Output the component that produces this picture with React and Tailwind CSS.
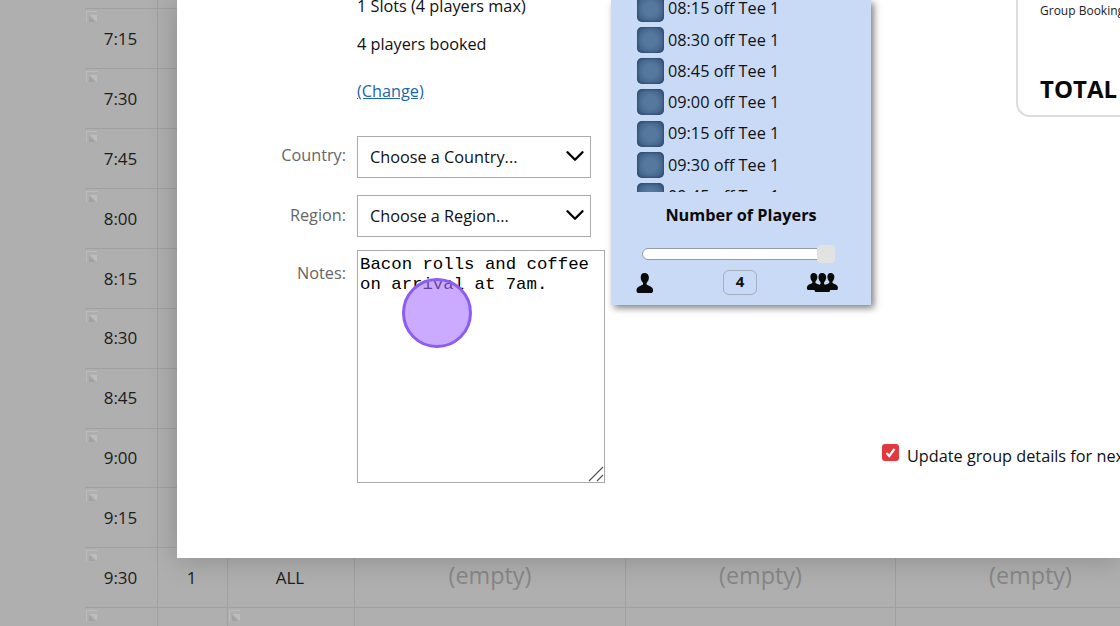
import React from 'react';
import { ChevronDown } from 'lucide-react';

const TIMES = ['', '7:15', '7:30', '7:45', '8:00', '8:15', '8:30', '8:45', '9:00', '9:15', '9:30', ''];
const TEE_TIMES = ['08:15', '08:30', '08:45', '09:00', '09:15', '09:30', '09:45'];

function BrokenImage() {
  return (
    <svg className="absolute left-px top-[2px]" width="12" height="12" viewBox="0 0 12 12" fill="none">
      <path d="M.5 11.500V.5h11" stroke="#bcbcbc" />
      <path d="M4 4h7v7z" fill="#bdbdbd" />
      <path d="M3 5v6h6z" fill="#a2a2a2" />
    </svg>
  );
}

function EmptyCell({ show, className }) {
  return (
    <div className={`flex items-center justify-center border-r border-[#a0a0a0] pb-[5px] text-[23.4px] text-[#878787] ${className}`}>
      {show && '(empty)'}
    </div>
  );
}

function GridRow({ time, index }) {
  const isSlot = time === '9:30';
  const isLast = index === TIMES.length - 1;
  return (
    <div className="flex h-[59.9px] border-b border-[#a0a0a0] text-[17px] text-[#1c1c1c]">
      <div className="relative flex w-[73px] items-center justify-center border-r border-[#a0a0a0] pr-[1px]">
        {index > 0 && <BrokenImage />}
        <span>{time}</span>
      </div>
      <div className="flex w-[70px] items-center justify-center border-r border-[#a0a0a0] pr-[2px]">{isSlot && '1'}</div>
      <div className="relative flex w-[127px] items-center justify-center border-r border-[#a0a0a0] pr-[2px]">
        {isLast && <BrokenImage />}
        {isSlot && 'ALL'}
      </div>
      <EmptyCell show={isSlot} className="w-[271px]" />
      <EmptyCell show={isSlot} className="w-[270px]" />
      <EmptyCell show={isSlot} className="w-[270px]" />
    </div>
  );
}

function SelectBox({ label, placeholder, className, labelClass }) {
  return (
    <div className={`flex items-start ${className}`}>
      <label className={`w-[169px] text-right text-[#666] ${labelClass}`}>{label}</label>
      <div className="relative ml-[11px] flex h-[42px] w-[234px] items-center border border-[#ababab] bg-white pl-[12px]">
        {placeholder}
        <ChevronDown className="absolute right-0 top-[4px] h-[30px] w-[30px] text-black" strokeWidth={1.9} />
      </div>
    </div>
  );
}

function Person({ x = 0, scale = 1 }) {
  return (
    <path
      transform={`translate(${x} 0) scale(${scale})`}
      d="M9 0c2.800 0 4.400 2 4.400 4.600 0 2.200-1 3.800-2 5-.6.800-.5 2 .4 2.500 2 1 5.200 1.800 5.700 4.500.3 1.700-.3 3.400-1.200 3.400H2.300c-.9 0-1.500-1.700-1.200-3.400.5-2.700 3.700-3.500 5.700-4.500.9-.5 1-1.700.4-2.500-1-1.200-2-2.800-2-5C5.200 2 6.200 0 9 0z"
      fill="#0a0a0a"
    />
  );
}

export default function App() {
  return (
    <div className="relative h-[626px] w-[1120px] overflow-hidden bg-[#afafaf] font-['Open_Sans',sans-serif]">
      {/* greyed-out tee sheet behind the dialog */}
      <div className="ml-[85px] -mt-[50.6px] w-[1100px]">
        {TIMES.map((t, i) => (
          <GridRow key={i} time={t} index={i} />
        ))}
      </div>

      {/* booking dialog */}
      <div className="absolute left-[177px] top-0 flex h-[558px] w-[943px] bg-white text-[16.25px] shadow-[0_0_28px_rgba(0,0,0,0.22)]">
        <div className="w-[434px] shrink-0 -mt-[6px] text-[#111]">
          <div className="ml-[180px] h-[24px] leading-[24px]">1 Slots (4 players max)</div>
          <div className="ml-[180px] mt-[14px] h-[24px] leading-[24px]">4 players booked</div>
          <a className="ml-[180px] mt-[23px] block h-[24px] leading-[24px] text-[#1a66b0] underline">(Change)</a>
          <SelectBox label="Country:" placeholder="Choose a Country..." className="mt-[33px]" labelClass="pt-[7px]" />
          <SelectBox label="Region:" placeholder="Choose a Region..." className="mt-[17px]" labelClass="pt-[8px]" />
          <div className="mt-[13px] flex items-start">
            <label className="w-[169px] pt-[11px] text-right text-[#666]">Notes:</label>
            <div className="relative ml-[11px] h-[233px] w-[248px]">
              <textarea
                readOnly
                className="h-full w-full resize-none border border-[#ababab] bg-white px-[2px] pt-[4px] font-['Liberation_Mono',monospace] text-[17.35px] leading-[20px] text-black outline-none"
                value="Bacon rolls and coffee on arrival at 7am."
              />
              <svg className="absolute bottom-[1px] right-[1px]" width="16" height="16" viewBox="0 0 16 16" fill="none">
                <path d="M1 15 15 1M9 15l6-6" stroke="#555" strokeWidth="1.200" />
              </svg>
            </div>
          </div>
        </div>

        {/* tee time picker */}
        <div className="h-[305px] w-[260px] shrink-0 bg-[#c9daf6] shadow-[3px_3px_7px_rgba(0,0,0,0.5)]">
          <div className="ml-[26px] h-[192px] overflow-hidden">
            <div className="-mt-[4.5px] flex flex-col gap-[5.25px]">
              {TEE_TIMES.map((t) => (
                <div key={t} className="flex h-[26px] shrink-0 items-center text-[#111]">
                  <span className="h-[26px] w-[27px] shrink-0 rounded-[5px] bg-[radial-gradient(circle,#55789f_35%,#35537a)] shadow-[inset_0_0_3px_rgba(25,45,75,0.8)]" />
                  <span className="ml-[4px]">{t} off Tee 1</span>
                </div>
              ))}
            </div>
          </div>
          <div className="mt-[11px] text-center font-bold leading-[24px] text-[#0a0a0a]">Number of Players</div>
          <div className="relative ml-[31px] mt-[21px] h-[12px] w-[193px] rounded-full border border-[#8d9bb3] bg-white">
            <span className="absolute -right-[1px] -top-[4px] h-[18px] w-[18px] rounded-[4px] bg-[#e2e2e2]" />
          </div>
          <div className="ml-[24px] mt-[10px] flex h-[24px] items-center">
            <svg width="19" height="21" viewBox="0 0 18 21" className="mt-[2px]">
              <Person />
            </svg>
            <span className="ml-[69px] flex h-[25px] w-[34px] items-center justify-center rounded-[6px] border border-[#a3aebf] pb-[2px] text-[15px] font-bold text-[#111]">4</span>
            <svg width="32" height="21" viewBox="0 0 32 21" className="ml-[49px] mt-[2px]">
              <Person x={0} scale={0.85} />
              <Person x={17} scale={0.85} />
              <Person x={7.500} scale={0.95} />
            </svg>
          </div>
        </div>

        {/* price summary and group update */}
        <div className="relative flex-1">
          <div className="ml-[145px] -mt-[2px] h-[119px] w-[200px] rounded-bl-[14px] border-b-2 border-l-2 border-[#dcdcdc] pl-[22px]">
            <div className="pt-[5px] text-[12px] leading-[16px] text-[#222]">Group Booking</div>
            <div className="mt-[54px] text-[24px] font-bold leading-[32px] text-[#0a0a0a]">TOTAL</div>
          </div>
          <div className="ml-[11px] mt-[324px] flex items-start whitespace-nowrap text-[#111]">
            <span className="mt-[3px] flex h-[17px] w-[17px] shrink-0 items-center justify-center rounded-[3px] bg-[#e2393f]">
              <svg width="11" height="11" viewBox="0 0 11 11" fill="none">
                <path d="M1.500 6 4.300 9 9.500 1.800" stroke="white" strokeWidth="2.200" />
              </svg>
            </span>
            <span className="ml-[8px] mt-[3px]">Update group details for next</span>
          </div>
        </div>
      </div>

      {/* click highlight */}
      <div className="absolute left-[402px] top-[278px] h-[70px] w-[70px] rounded-full border-[3px] border-[#8b5cf6] bg-[#a673ff]/60" />
    </div>
  );
}
